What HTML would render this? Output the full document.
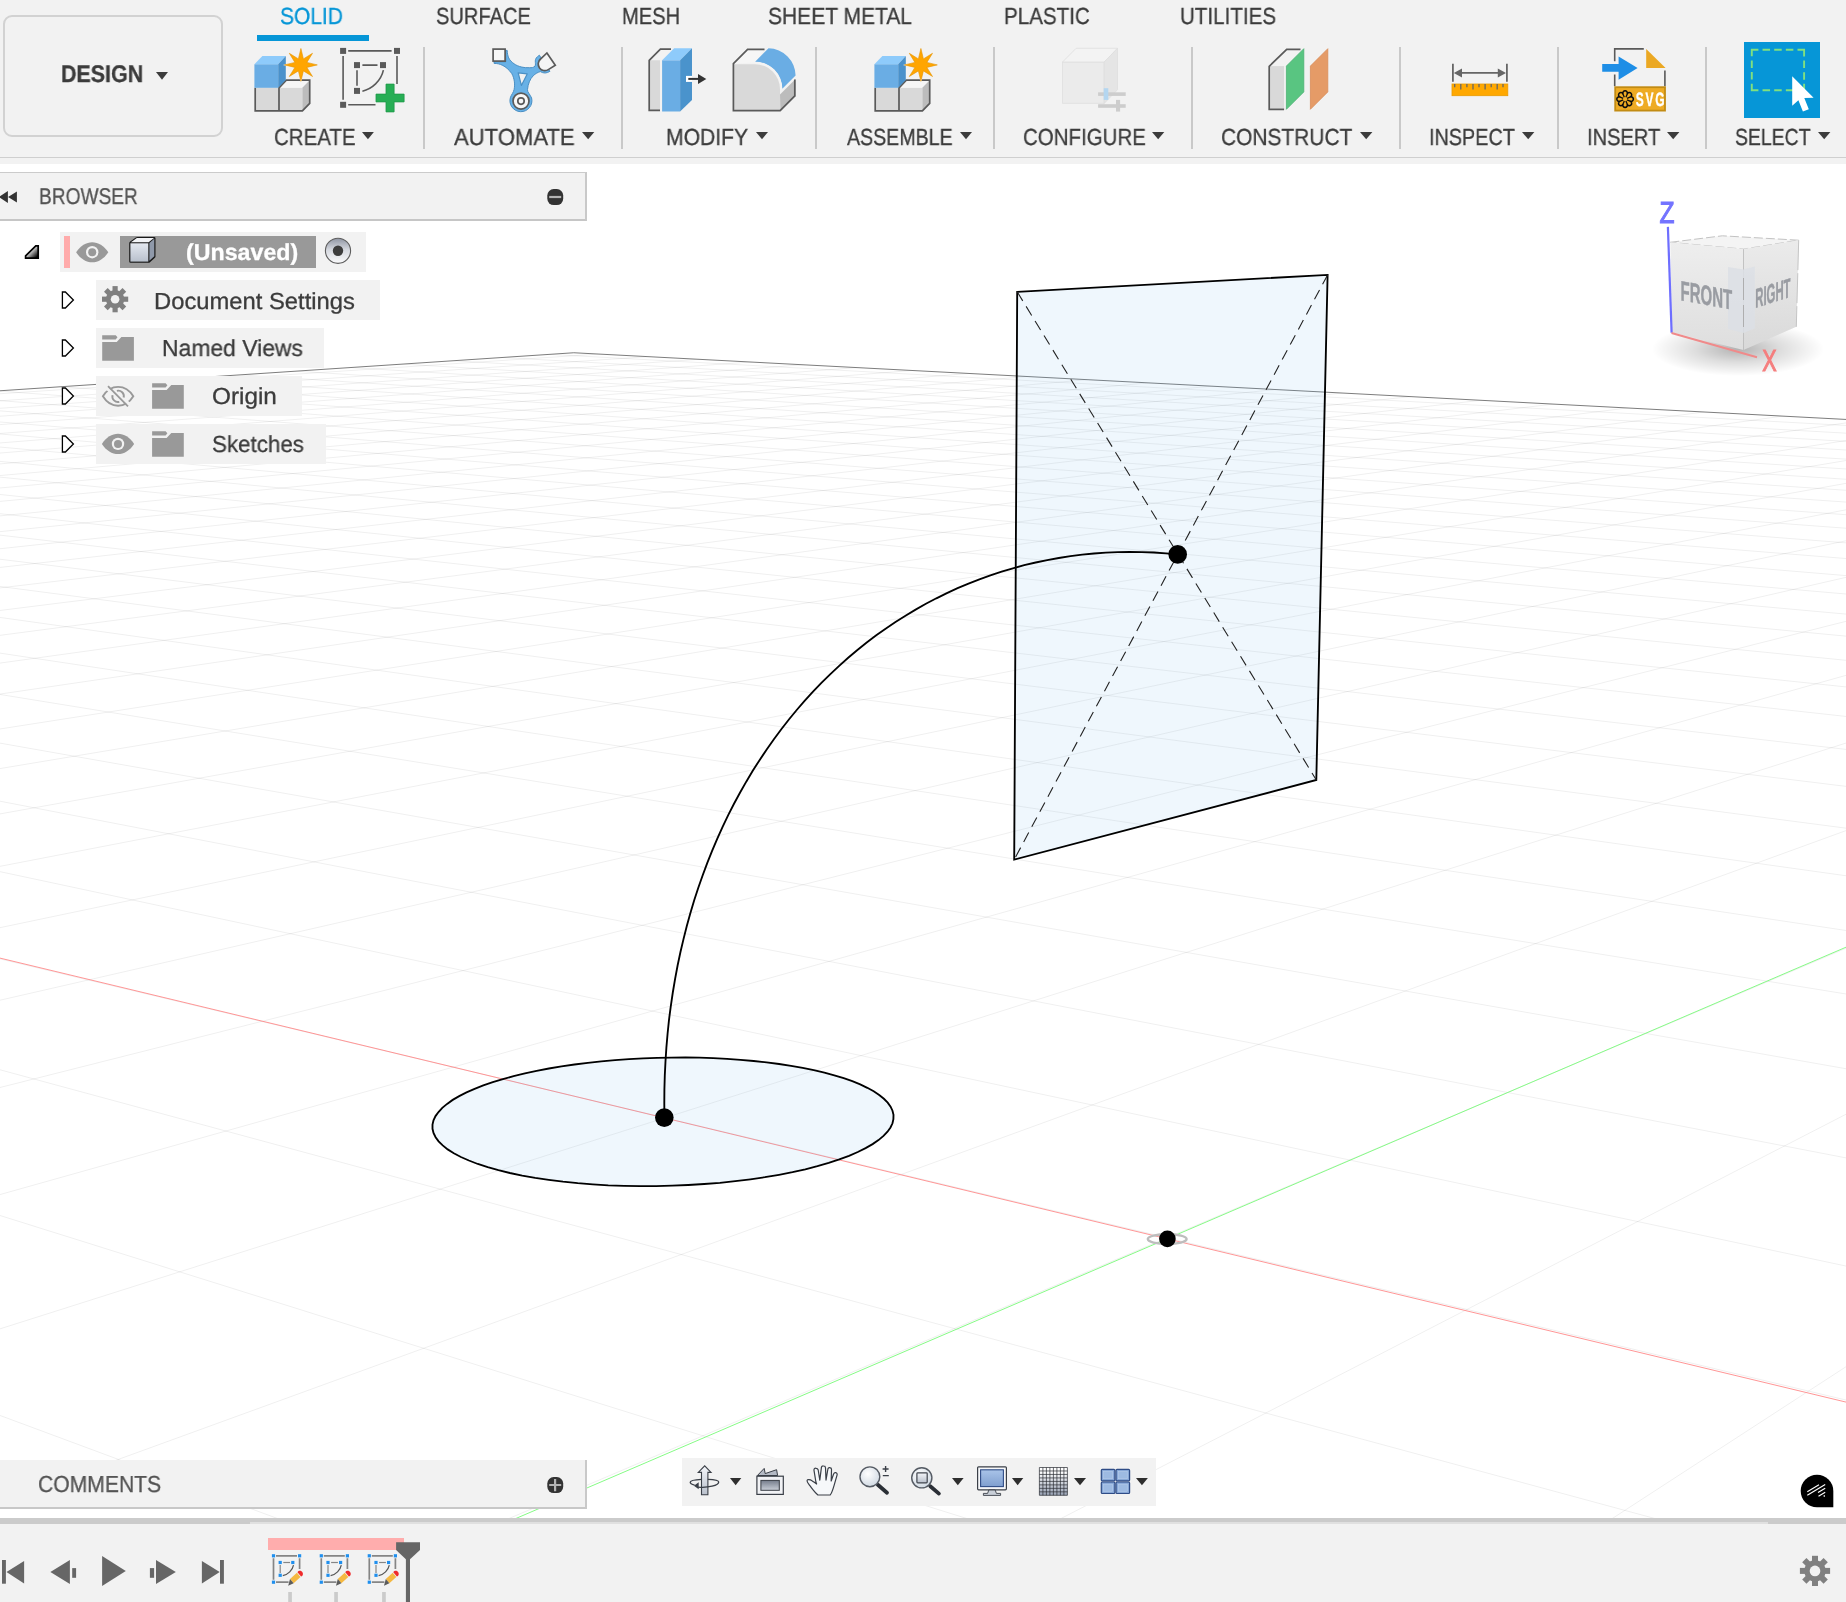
<!DOCTYPE html>
<html lang="en"><head><meta charset="utf-8"><title>Autodesk Fusion 360</title>
<style>
html,body{margin:0;padding:0}
body{width:1846px;height:1602px;position:relative;overflow:hidden;background:#fff;font-family:"Liberation Sans",sans-serif;text-rendering:geometricPrecision}
.a{position:absolute}
.t{position:absolute;white-space:nowrap;transform-origin:0 0;line-height:1;display:block;will-change:transform;-webkit-text-stroke:0.3px}
svg{position:absolute;overflow:visible}
#toolbar{left:0;top:0;width:1846px;height:164px;background:#f2f2f2}
#tbline{left:0;top:157px;width:1846px;height:1px;background:#cfcfcf}
.div{position:absolute;top:47px;width:2px;height:102px;background:#c9c9c9}
#canvas{left:0;top:164px;width:1846px;height:1354px;background:#fff;overflow:hidden}
#canvas svg{left:0;top:0}
.panelhdr{background:#f2f2f2;box-sizing:border-box}
.row{position:absolute;height:40px;background:#f2f2f2}
#timeline{left:0;top:1524px;width:1846px;height:78px;background:#f2f2f2}
#sep{left:0;top:1518px;width:1846px;height:6px;background:#cbcbcb}
#navbar{left:682px;top:1458px;width:474px;height:48px;background:#f2f2f2}
</style></head>
<body>
<div id="canvas" class="a"><svg width="1846" height="1354" viewBox="0 164 1846 1354">
<defs><clipPath id="gclip"><path d="M-5 391.1L573.8 352.75L1851 419.7V1600H-5Z"/></clipPath></defs>
<path clip-path="url(#gclip)" d="M-2908.9 586.4L666.5 349.6M-2895.1 598L714.7 352.1M-2880.5 610.3L764 354.7M-2865.1 623.2L814.5 357.4M-2848.8 636.8L866.2 360.1M-2831.7 651.2L919.2 362.8M-2813.5 666.5L973.5 365.6M-2794.2 682.6L1029.1 368.5M-2773.7 699.8L1086.2 371.5M-2751.8 718.2L1144.8 374.6M-2728.5 737.7L1204.9 377.7M-2703.6 758.6L1266.5 380.9M-2676.9 781L1329.9 384.2M-2648.2 805.1L1395 387.6M-2617.2 831L1461.8 391.1M-2583.8 859L1530.6 394.7M-2547.6 889.4L1601.3 398.4M-2508.2 922.5L1674 402.2M-2465.2 958.5L1748.8 406.1M-2418 998.1L1825.9 410.1M-2366.1 1041.6L1905.3 414.2M-2308.7 1089.7L1987.1 418.5M-2244.9 1143.2L2071.5 422.9M-2173.5 1203.1L2158.5 427.4M-2093 1270.6L2248.3 432.1M-2001.7 1347.2L2341.1 437M-1897.2 1434.8L2436.9 442M-1776.4 1536.1L2535.9 447.1M-1635.2 1654.5L2638.3 452.5M-1468 1794.7L2744.3 458M-1266.7 1963.5L2854.1 463.7M-1019.8 2170.6L2967.8 469.7M-709.8 2430.5L3085.7 475.8M-309.2 2766.4L3208 482.2M228.9 3217.6L3334.9 488.8M989.7 3855.6L3466.8 495.7M-2934.7 564.8L2147.6 4826.5M-2740.1 552.6L2537.4 3669.3M-2556.6 541.1L2772.6 2971M-2383.2 530.3L2930 2503.7M-2219.2 520L3042.7 2169.1M-2063.7 510.2L3127.4 1917.8M-1916.2 501L3193.3 1722M-1776 492.2L3246.1 1565.2M-1642.6 483.8L3289.4 1436.8M-1515.5 475.8L3325.4 1329.7M-1394.3 468.2L3356 1239M-1278.6 461L3382.2 1161.3M-1167.9 454L3404.9 1093.9M-1062.1 447.4L3424.8 1034.9M-960.8 441L3442.3 982.8M-863.6 434.9L3457.9 936.5M-770.5 429.1L3471.9 895M-681 423.5L3484.4 857.7M-595 418.1L3495.8 824M-512.3 412.9L3506.1 793.3M-432.7 407.9L3515.6 765.2M-356.1 403.1L3524.2 739.5M-282.2 398.5L3532.2 715.9M-210.9 394L3539.6 694M-142.2 389.7L3546.4 673.8M-75.8 385.5L3552.7 655M-11.6 381.5L3558.6 637.5M50.4 377.6L3564.1 621.2M110.4 373.8L3569.2 605.9M168.5 370.2L3574.1 591.6M224.7 366.7L3578.6 578.2M279.2 363.2L3582.9 565.5M332 359.9L3586.9 553.6M383.2 356.7L3590.7 542.3M432.9 353.6L3594.3 531.6M481.1 350.6L3597.7 521.5" fill="none" stroke="#000" stroke-opacity="0.062" stroke-width="1"/>
<path d="M-5 391.1L573.8 352.75L1851 419.7" fill="none" stroke="#7d7d7d" stroke-width="1"/>
<path d="M-10 955.7L1856 1404.5" stroke="#ff8a8a" stroke-width="0.9" fill="none"/>
<path d="M467.2 1539.4L1867.2 938.1" stroke="#86fb86" stroke-width="1" fill="none"/>
<ellipse cx="1167.2" cy="1239.1" rx="19.4" ry="4.9" fill="none" stroke="#bdbdbd" stroke-width="2.4"/>
<circle cx="1167.4" cy="1238.9" r="8.3" fill="#000"/>
<path d="M839.3 1159.4L849 1155.8L857.8 1152L865.6 1148.1L872.6 1144.1L878.5 1140.1L883.5 1135.9L887.5 1131.7L890.5 1127.5L892.5 1123.3L893.4 1119.1L893.5 1114.9L892.5 1110.7L890.6 1106.7L887.7 1102.7L883.9 1098.8L879.2 1095L873.7 1091.3L867.3 1087.8L860.2 1084.4L852.3 1081.2L843.7 1078.2L834.3 1075.3L824.4 1072.6L813.8 1070.1L802.7 1067.9L791.1 1065.8L779.1 1064L766.6 1062.4L753.7 1061L740.5 1059.8L727 1058.9L713.3 1058.2L699.4 1057.7L685.4 1057.5L671.3 1057.6L657.2 1057.9L643.1 1058.4L629 1059.1L615.1 1060.1L601.3 1061.3L587.8 1062.8L574.5 1064.5L561.5 1066.4L548.9 1068.5L536.6 1070.9L524.9 1073.4L513.6 1076.1L502.9 1079.1L492.8 1082.2L483.3 1085.4L474.6 1088.8L466.5 1092.4L459.2 1096.1L452.7 1099.9L447.1 1103.9L442.3 1107.9L438.5 1112L435.5 1116.1L433.5 1120.3L432.5 1124.6L432.5 1128.8L433.5 1133L435.6 1137.2L438.6 1141.3L442.7 1145.4L447.7 1149.4L453.8 1153.2L460.9 1157L468.9 1160.5L477.8 1164L487.7 1167.2L498.4 1170.2L509.9 1173L522.2 1175.6L535.2 1177.9L548.8 1179.9L563 1181.7L577.7 1183.2L592.8 1184.4L608.3 1185.3L624.1 1185.8L640.1 1186.1L656.1 1186.1L672.2 1185.7L688.3 1185L704.2 1184L719.9 1182.8L735.3 1181.2L750.4 1179.3L764.9 1177.2L779 1174.8L792.5 1172.2L805.3 1169.3L817.4 1166.2L828.7 1162.9Z" fill="#60b0f0" fill-opacity="0.1" stroke="#000" stroke-width="1.85"/>
<path d="M1017.2 291.8L1327.6 274.9L1316.3 780L1014.2 859.6Z" fill="#60b0f0" fill-opacity="0.1" stroke="#000" stroke-width="1.85" stroke-linejoin="miter"/>
<path d="M1017.2 291.8L1316.3 780.0M1327.6 274.9L1014.2 859.6" fill="none" stroke="#222" stroke-width="1.1" stroke-dasharray="10.6 6.5"/>
<path d="M664.4 1117.6L664.3 1103.5L664.4 1089.4L664.8 1075.3L665.5 1061.3L666.4 1047.4L667.6 1033.5L669 1019.8L670.8 1006.1L672.8 992.5L675.1 978.9L677.6 965.5L680.4 952.2L683.5 939.1L686.8 926L690.4 913.1L694.2 900.3L698.3 887.7L702.7 875.2L707.3 862.9L712.2 850.7L717.3 838.7L722.6 826.9L728.2 815.2L734 803.8L740.1 792.5L746.4 781.4L752.9 770.6L759.7 759.9L766.7 749.5L773.9 739.3L781.3 729.3L788.9 719.5L796.7 710L804.8 700.7L813 691.7L821.4 682.9L830.1 674.3L838.9 666.1L847.9 658L857.1 650.3L866.4 642.8L875.9 635.6L885.6 628.7L895.5 622L905.5 615.7L915.6 609.6L925.9 603.8L936.4 598.3L946.9 593.1L957.6 588.2L968.5 583.6L979.4 579.3L990.4 575.3L1001.6 571.7L1012.9 568.3L1024.2 565.2L1035.7 562.5L1047.2 560.1L1058.8 558L1070.5 556.2L1082.2 554.7L1094 553.5L1105.9 552.7L1117.8 552.1L1129.8 551.9L1141.8 552.1L1153.8 552.5L1165.8 553.3L1177.9 554.3" fill="none" stroke="#000" stroke-width="1.85"/>
<circle cx="664.3" cy="1117.6" r="9.3" fill="#000"/>
<circle cx="1177.7" cy="554.4" r="9.3" fill="#000"/>
</svg></div>
<div id="toolbar" class="a">
<div id="tbline" class="a"></div>
<div class="a" style="left:3px;top:15px;width:216px;height:118px;border:2px solid #d2d2d2;border-radius:9px;box-sizing:content-box"></div>
<span class="t " style="left:61.2px;top:63px;font-size:24px;color:#3c3c3c;transform:scaleX(0.8931);font-weight:bold;">DESIGN</span>
<svg style="left:156px;top:71.9px" width="12" height="7.7" viewBox="156 71.9 12 7.7"><path d="M156 71.9H168L162 79.6Z" fill="#3c3c3c"/></svg>
<span class="t " style="left:279.6px;top:5px;font-size:23.3px;color:#0696d7;transform:scaleX(0.9013);">SOLID</span>
<span class="t " style="left:435.8px;top:5px;font-size:23.3px;color:#3c3c3c;transform:scaleX(0.8620);">SURFACE</span>
<span class="t " style="left:621.9px;top:5px;font-size:23.3px;color:#3c3c3c;transform:scaleX(0.8628);">MESH</span>
<span class="t " style="left:767.7px;top:5px;font-size:23.3px;color:#3c3c3c;transform:scaleX(0.9016);">SHEET METAL</span>
<span class="t " style="left:1003.9px;top:5px;font-size:23.3px;color:#3c3c3c;transform:scaleX(0.8841);">PLASTIC</span>
<span class="t " style="left:1180.2px;top:5px;font-size:23.3px;color:#3c3c3c;transform:scaleX(0.8832);">UTILITIES</span>
<div class="a" style="left:257px;top:35px;width:112px;height:6px;background:#0696d7"></div>
<span class="t " style="left:273.9px;top:126px;font-size:23.3px;color:#3c3c3c;transform:scaleX(0.8789);">CREATE</span>
<svg style="left:362px;top:132.1px" width="11.9" height="7.3" viewBox="362 132.1 11.9 7.3"><path d="M362 132.1H373.9L367.95 139.4Z" fill="#3c3c3c"/></svg>
<span class="t " style="left:454.3px;top:126px;font-size:23.3px;color:#3c3c3c;transform:scaleX(0.9479);">AUTOMATE</span>
<svg style="left:582px;top:132.1px" width="12.3" height="7.3" viewBox="582 132.1 12.3 7.3"><path d="M582 132.1H594.3L588.15 139.4Z" fill="#3c3c3c"/></svg>
<span class="t " style="left:665.6px;top:126px;font-size:23.3px;color:#3c3c3c;transform:scaleX(0.9069);">MODIFY</span>
<svg style="left:755.7px;top:132.1px" width="12" height="7.3" viewBox="755.7 132.1 12 7.3"><path d="M755.7 132.1H767.7L761.7 139.4Z" fill="#3c3c3c"/></svg>
<span class="t " style="left:847px;top:126px;font-size:23.3px;color:#3c3c3c;transform:scaleX(0.8416);">ASSEMBLE</span>
<svg style="left:960.3px;top:132.1px" width="12" height="7.3" viewBox="960.3 132.1 12 7.3"><path d="M960.3 132.1H972.3L966.3 139.4Z" fill="#3c3c3c"/></svg>
<span class="t " style="left:1023px;top:126px;font-size:23.3px;color:#3c3c3c;transform:scaleX(0.8791);">CONFIGURE</span>
<svg style="left:1151.8px;top:132.1px" width="12.3" height="7.3" viewBox="1151.8 132.1 12.3 7.3"><path d="M1151.8 132.1H1164.1L1157.95 139.4Z" fill="#3c3c3c"/></svg>
<span class="t " style="left:1220.8px;top:126px;font-size:23.3px;color:#3c3c3c;transform:scaleX(0.8980);">CONSTRUCT</span>
<svg style="left:1359.5px;top:132.1px" width="12.4" height="7.3" viewBox="1359.5 132.1 12.4 7.3"><path d="M1359.5 132.1H1371.9L1365.7 139.4Z" fill="#3c3c3c"/></svg>
<span class="t " style="left:1429px;top:126px;font-size:23.3px;color:#3c3c3c;transform:scaleX(0.8504);">INSPECT</span>
<svg style="left:1521.8px;top:132.1px" width="12.4" height="7.3" viewBox="1521.8 132.1 12.4 7.3"><path d="M1521.8 132.1H1534.2L1528 139.4Z" fill="#3c3c3c"/></svg>
<span class="t " style="left:1586.7px;top:126px;font-size:23.3px;color:#3c3c3c;transform:scaleX(0.8631);">INSERT</span>
<svg style="left:1667.4px;top:132.1px" width="12.4" height="7.3" viewBox="1667.4 132.1 12.4 7.3"><path d="M1667.4 132.1H1679.8L1673.6 139.4Z" fill="#3c3c3c"/></svg>
<span class="t " style="left:1735.1px;top:126px;font-size:23.3px;color:#3c3c3c;transform:scaleX(0.8330);">SELECT</span>
<svg style="left:1817.8px;top:132.1px" width="12.4" height="7.3" viewBox="1817.8 132.1 12.4 7.3"><path d="M1817.8 132.1H1830.2L1824 139.4Z" fill="#3c3c3c"/></svg>
<div class="div" style="left:423px"></div>
<div class="div" style="left:621px"></div>
<div class="div" style="left:815px"></div>
<div class="div" style="left:993px"></div>
<div class="div" style="left:1191px"></div>
<div class="div" style="left:1399px"></div>
<div class="div" style="left:1557px"></div>
<div class="div" style="left:1705px"></div>
<svg style="left:240px;top:40px" width="180" height="80" viewBox="240 40 180 80"><g transform="translate(0 0)"><path d="M255.2 87.8H302.4V110.9H255.2Z" fill="#d9d9d9"/><path d="M279 87.8L286.3 80.2H309.7L302.4 87.8Z" fill="#f6f6f6"/><path d="M302.4 87.8L309.7 80.2V103.4L302.4 110.9Z" fill="#bcbcbc"/><path d="M255.2 87.8V110.9H302.4L309.7 103.4V80.2H286.3L279 87.8V110.9" fill="none" stroke="#5a5a5a" stroke-width="1.7" stroke-linejoin="miter"/><path d="M254.4 64.2H278.2V87.8H254.4Z" fill="#6aade4"/><path d="M254.4 64.2L262.4 56.1H285.8L278.2 64.2Z" fill="#8ecbfb"/><path d="M278.2 64.2L285.8 56.1V80L278.2 87.8Z" fill="#4a91cb"/><path d="M300.9 46.9L304.0 57.5L313.6 52.2L308.3 61.8L318.9 64.9L308.3 68.0L313.6 77.6L304.0 72.3L300.9 82.9L297.8 72.3L288.2 77.6L293.5 68.0L282.9 64.9L293.5 61.8L288.2 52.2L297.8 57.5Z" fill="#f2f2f2"/><path d="M300.9 48.5L303.4 58.9L312.5 53.3L306.9 62.4L317.3 64.9L306.9 67.4L312.5 76.5L303.4 70.9L300.9 81.3L298.4 70.9L289.3 76.5L294.9 67.4L284.5 64.9L294.9 62.4L289.3 53.3L298.4 58.9Z" fill="#ffa500" stroke="#e59400" stroke-width="0.6"/></g><rect x="340.1" y="47.9" width="6" height="6" fill="#5a5a5a"/><rect x="394.0" y="47.9" width="6" height="6" fill="#5a5a5a"/><rect x="340.1" y="101.8" width="6" height="6" fill="#5a5a5a"/><path d="M348.2 50.9H391.6M343.1 56.1V99.7M397 56.1V83.9M348.2 104.8H375.5" stroke="#5a5a5a" stroke-width="1.6" fill="none"/><rect x="354.0" y="62.1" width="6" height="6" fill="#5a5a5a"/><rect x="380.0" y="62.1" width="6" height="6" fill="#5a5a5a"/><rect x="354.0" y="87.9" width="6" height="6" fill="#5a5a5a"/><path d="M362.4 65.1H377.5M357 70.2V85.8M383.4 70.2C381 81 372 89 362.4 91.2" stroke="#5a5a5a" stroke-width="1.6" fill="none"/><path d="M386 84.1H394.1V94.1H404.1V101.9H394.1V111.9H386V101.9H376V94.1H386Z" fill="#27ae55" stroke="#1f9849" stroke-width="0.8"/></svg>
<svg style="left:470px;top:40px" width="130" height="80" viewBox="470 40 130 80"><path d="M494.1 63.4C499.8 63.4 505.8 65.5 511.7 73.4C514.8 79 515 85 514.1 89.5C513.5 92.5 511.5 94.5 510.5 97.2A11 11 0 1 0 531.6 98C530 94 527 92 527.5 89.5C528 84 530 79 533.2 75.8C535.5 73.5 538 72.3 540.3 71.6A8.9 8.9 0 0 0 549.9 71.3L544.5 63.8L539.4 55.2C536.5 57 535.3 59 535.3 60.9C535.3 63 535.8 64.8 535 66.2C533.5 67.6 531.5 67.8 529.6 67.7C527 67.9 524 67.6 521.8 67.1C519 66.4 516 65.3 514.1 63.8C511.5 62 509.7 60 508.7 57.9C507.7 55.6 507.3 53 507.2 50.4L505.8 50.4L505.8 61.8L494.1 61.8Z" fill="#68b1e6" stroke="#4a8fc4" stroke-width="1"/><path d="M518.2 72.8L527.2 73.9L521.4 85.4Z" fill="#f2f2f2" stroke="#4a8fc4" stroke-width="1.2" stroke-linejoin="round"/><rect x="493.1" y="49.1" width="12" height="12" fill="#f7f7f7" stroke="#5a5a5a" stroke-width="1.7"/><path d="M546.9 53L555.3 65.2L548.3 69.6A6.6 6.6 0 0 1 540.5 59Z" fill="#f5f5f5" stroke="#5a5a5a" stroke-width="1.7" stroke-linejoin="miter"/><circle cx="521" cy="101.1" r="8" fill="#f7f7f7" stroke="#5a5a5a" stroke-width="1.7"/><circle cx="521" cy="101.1" r="3.2" fill="#f7f7f7" stroke="#5a5a5a" stroke-width="1.7"/></svg>
<svg style="left:640px;top:40px" width="170" height="80" viewBox="640 40 170 80"><path d="M649.5 60.3H660V110.2H649.5Z" fill="#d9d9d9"/><path d="M660 110.4H649.2V60.4L660.4 49.2H671" fill="none" stroke="#5a5a5a" stroke-width="1.7"/><path d="M662.1 60.3H680.1V111.4H662.1Z" fill="#6aade4"/><path d="M662.1 60.3L674.1 48.3H692L680.1 60.3Z" fill="#8ecbfb"/><path d="M680.1 60.3L692 48.3V99.9L680.1 111.4Z" fill="#4a93cc"/><rect x="686" y="75.9" width="6" height="6" fill="#fff"/><path d="M688.3 78.9H699" stroke="#333" stroke-width="2" fill="none"/><path d="M698 74.1L706.3 78.9L698 84Z" fill="#333"/><path d="M733.4 64.2H755 A25 25 0 0 1 780 89 V110.5H733.4Z" fill="#d9d9d9"/><path d="M733.4 63.5L747.6 49.4H765L755 62.5Z" fill="#f6f6f6"/><path d="M780 94.5L795.6 78.9V96.2L780.4 111.4Z" fill="#bcbcbc"/><path d="M755.1 61.7L768.5 48.3A27.5 27.5 0 0 1 795.6 75.5L782.3 88.8A27 27 0 0 0 755.1 61.7Z" fill="#6aade4"/><path d="M755.1 62.7A26.5 26.5 0 0 1 781.3 89.5" fill="none" stroke="#f4f4f4" stroke-width="1.6"/><path d="M764.5 49.4H747.6L733.4 63.6V110.6H780.1L794.8 95.9V79.5" fill="none" stroke="#5a5a5a" stroke-width="1.7"/></svg>
<svg style="left:860px;top:40px" width="120" height="80" viewBox="860 40 120 80"><g transform="translate(620 0)"><path d="M255.2 87.8H302.4V110.9H255.2Z" fill="#d9d9d9"/><path d="M279 87.8L286.3 80.2H309.7L302.4 87.8Z" fill="#f6f6f6"/><path d="M302.4 87.8L309.7 80.2V103.4L302.4 110.9Z" fill="#bcbcbc"/><path d="M255.2 87.8V110.9H302.4L309.7 103.4V80.2H286.3L279 87.8V110.9" fill="none" stroke="#5a5a5a" stroke-width="1.7" stroke-linejoin="miter"/><path d="M254.4 64.2H278.2V87.8H254.4Z" fill="#6aade4"/><path d="M254.4 64.2L262.4 56.1H285.8L278.2 64.2Z" fill="#8ecbfb"/><path d="M278.2 64.2L285.8 56.1V80L278.2 87.8Z" fill="#4a91cb"/><path d="M300.9 46.9L304.0 57.5L313.6 52.2L308.3 61.8L318.9 64.9L308.3 68.0L313.6 77.6L304.0 72.3L300.9 82.9L297.8 72.3L288.2 77.6L293.5 68.0L282.9 64.9L293.5 61.8L288.2 52.2L297.8 57.5Z" fill="#f2f2f2"/><path d="M300.9 48.5L303.4 58.9L312.5 53.3L306.9 62.4L317.3 64.9L306.9 67.4L312.5 76.5L303.4 70.9L300.9 81.3L298.4 70.9L289.3 76.5L294.9 67.4L284.5 64.9L294.9 62.4L289.3 53.3L298.4 58.9Z" fill="#ffa500" stroke="#e59400" stroke-width="0.6"/></g></svg>
<svg style="left:1050px;top:40px" width="90" height="80" viewBox="1050 40 90 80"><path d="M1062.5 62H1104.2V103.4H1062.5Z" fill="#ebebeb" stroke="#dedede" stroke-width="0.8"/><path d="M1062.5 62L1076.1 48.3H1117.5L1104.2 62Z" fill="#f3f3f3" stroke="#dedede" stroke-width="0.8"/><path d="M1104.2 62L1117.5 48.3V89.7L1104.2 103.4Z" fill="#e5e5e5" stroke="#dedede" stroke-width="0.8"/><rect x="1098.1" y="92.3" width="27.6" height="3.6" fill="#cdcdcd"/><rect x="1098.1" y="104.2" width="27.6" height="3.6" fill="#cdcdcd"/><rect x="1103.7" y="88.2" width="4.6" height="11.7" fill="#b4d6f0"/><rect x="1116" y="99.9" width="4.1" height="11.7" fill="#cdcdcd"/></svg>
<svg style="left:1250px;top:40px" width="100" height="80" viewBox="1250 40 100 80"><path d="M1270 66.1H1284.1V108.6H1270Z" fill="#d9d9d9"/><path d="M1284.1 109.3H1269.2V66.3L1286.7 49.4H1300.5" fill="none" stroke="#5a5a5a" stroke-width="1.7"/><path d="M1286.4 66.1L1303.8 48.7V91.9L1286.4 109.3Z" fill="#59c581" stroke="#4db373" stroke-width="0.8"/><path d="M1310.4 66.1L1327.8 48.7V91.9L1310.4 109.3Z" fill="#e59b67" stroke="#d98c58" stroke-width="0.8"/></svg>
<svg style="left:1440px;top:40px" width="80" height="80" viewBox="1440 40 80 80"><rect x="1452" y="84" width="55.8" height="11.7" fill="#ffa800" stroke="#e99b00" stroke-width="0.8"/><path d="M1454.7 84V87.3M1460.8 84V89.6M1466.9 84V87.3M1473.0 84V89.6M1479.0 84V87.3M1485.1 84V89.6M1491.2 84V87.3M1497.2 84V89.6M1503.0 84V87.3" stroke="#666" stroke-width="1.3" fill="none"/><path d="M1452.9 63.8V81.7M1506.9 63.8V81.7M1459 72.9H1501" stroke="#666" stroke-width="1.8" fill="none"/><path d="M1453.8 72.9L1462 68.4V77.4ZM1506 72.9L1497.8 68.4V77.4Z" fill="#666"/></svg>
<svg style="will-change:transform;left:1595px;top:40px" width="80" height="80" viewBox="1595 40 80 80"><path d="M1643.8 48.9H1614.7V61.3M1614.7 74.5V86.3M1664.9 70.4V86.3" fill="none" stroke="#5a5a5a" stroke-width="1.6"/><path d="M1646.2 48.9L1665.6 67.9H1646.2Z" fill="#eba823"/><path d="M1602.2 64.1H1618.6V56.5L1637.6 67.9L1618.6 79.7V71.7H1602.2Z" fill="#1e8ee6"/><rect x="1615.2" y="87.2" width="49.8" height="23.4" fill="#eeab24" stroke="#c28c14" stroke-width="1.8"/><path d="M1630.55 101.36A2.32 2.32 0 1 1 1627.36 104.55A2.32 2.32 0 1 1 1622.84 104.55A2.32 2.32 0 1 1 1619.65 101.36A2.32 2.32 0 1 1 1619.65 96.84A2.32 2.32 0 1 1 1622.84 93.65A2.32 2.32 0 1 1 1627.36 93.65A2.32 2.32 0 1 1 1630.55 96.84A2.32 2.32 0 1 1 1630.55 101.36Z" fill="#eeab24" stroke="#0c0c0c" stroke-width="1.55" stroke-linejoin="round"/><path d="M1627.04 99.90L1630.55 101.36M1625.90 101.04L1627.36 104.55M1624.30 101.04L1622.84 104.55M1623.16 99.90L1619.65 101.36M1623.16 98.30L1619.65 96.84M1624.30 97.16L1622.84 93.65M1625.90 97.16L1627.36 93.65M1627.04 98.30L1630.55 96.84" stroke="#0c0c0c" stroke-width="1.3" fill="none"/><text transform="translate(1635.8 105.8) scale(0.62 1)" letter-spacing="2.9" font-family="Liberation Sans, sans-serif" font-weight="bold" font-size="19.3" fill="#fff" stroke="#fff" stroke-width="0.35">SVG</text></svg>
<div class="a" style="left:1744px;top:42px;width:76px;height:76px;background:#0696d7"></div>
<svg style="left:1744px;top:42px" width="76" height="76" viewBox="1744 42 76 76"><path d="M1750.9 49.8H1805M1804.1 48.9V91.2M1805 90.3H1750.9M1751.8 91.2V48.9" fill="none" stroke="#80e080" stroke-width="1.9" stroke-dasharray="7.5 4.15"/><path d="M1792.2 76.3V105.7L1798.4 100.2L1802.9 111.5L1808.8 109.2L1804.3 98.1L1813.6 97.7Z" fill="#fff"/></svg>
</div>
<div id="browser" class="a" style="left:0;top:0;width:600px;height:470px">
<div class="a panelhdr" style="left:-2px;top:172px;width:589px;height:49px;border:1px solid #cbcbcb;border-bottom:2px solid #c6c6c6;border-right:2px solid #c9c9c9"></div>
<svg style="left:0px;top:186px" width="20" height="22" viewBox="0 186 20 22"><path d="M7.9 191.1V203L-1 197ZM16.9 191.4V202.4L8.1 196.9Z" fill="#333"/></svg>
<span class="t " style="left:38.8px;top:185px;font-size:22.8px;color:#555;transform:scaleX(0.8390);">BROWSER</span>
<svg style="left:545px;top:187px" width="20" height="20" viewBox="545 187 20 20"><rect x="547.3" y="189.1" width="15.9" height="16" rx="6.4" fill="#333"/><rect x="549.2" y="195.9" width="12" height="2.2" fill="#b4b4b4"/></svg>
<div class="row" style="left:60px;top:232px;width:306px"></div>
<div class="row" style="left:96px;top:280px;width:284px"></div>
<div class="row" style="left:96px;top:328px;width:228px"></div>
<div class="row" style="left:96px;top:376px;width:206px"></div>
<div class="row" style="left:96px;top:424px;width:230px"></div>
<div class="a" style="left:64px;top:236px;width:6px;height:32px;background:#ffabab"></div>
<div class="a" style="left:120px;top:236px;width:196px;height:32px;background:#999"></div>
<svg style="left:20px;top:230px" width="350" height="44" viewBox="20 230 350 44"><defs><linearGradient id="tg" x1="0" y1="0" x2="1" y2="1"><stop offset="0.45" stop-color="#c8c8c8"/><stop offset="0.9" stop-color="#000"/></linearGradient><linearGradient id="cg" x1="0" y1="0" x2="0" y2="1"><stop offset="0" stop-color="#e4e8f0"/><stop offset="1" stop-color="#b8c0cc"/></linearGradient><linearGradient id="rg" x1="0" y1="0" x2="0" y2="1"><stop offset="0" stop-color="#8f95a3"/><stop offset="0.45" stop-color="#d4d7de"/><stop offset="1" stop-color="#fbfbfc"/></linearGradient></defs><path d="M25.6 255.9L35.8 245.9H38.2V258.1H25.6Z" fill="url(#tg)" stroke="#000" stroke-width="1.7" stroke-linejoin="miter"/><path d="M76.1 252.2C84.7 238.79999999999998 99.7 238.79999999999998 108.30000000000001 252.2C99.7 265.59999999999997 84.7 265.59999999999997 76.1 252.2Z" fill="#999"/><circle cx="92.2" cy="252.2" r="6.2" fill="#f2f2f2"/><circle cx="92.2" cy="252.2" r="4" fill="#999"/><path d="M129.2 243.4Q129.2 242.2 130.2 241.6L135.8 237.4Q136.6 236.9 137.6 236.9H154.2Q155.5 236.9 155.5 238.2V256.4Q155.5 257.2 154.9 257.8L150 262.2Q149.3 262.8 148.4 262.8H130.6Q129.2 262.8 129.2 261.4Z" fill="#1a1a1a"/><path d="M130.4 243.3H148.3V261.6H130.4Z" fill="url(#cg)"/><path d="M131 242.2L136.9 238.1H154L148.6 242.2Z" fill="#f3f4f7"/><path d="M149.4 243L154.3 238.8V256.3L149.4 260.8Z" fill="#8f99aa"/><circle cx="338" cy="250.8" r="12.6" fill="url(#rg)" stroke="#5e5e5e" stroke-width="1.1"/><circle cx="338" cy="250.8" r="5.2" fill="#3c3c3c"/></svg>
<span class="t " style="left:185.6px;top:241px;font-size:23px;color:#fff;transform:scaleX(1.0089);font-weight:bold;">(Unsaved)</span>
<svg style="left:55px;top:280px" width="80" height="40" viewBox="55 280 80 40"><path d="M62.4 292H65.4L73.4 300L65.4 308H62.4Z" fill="#fff" stroke="#000" stroke-width="1.3" stroke-linejoin="miter"/><circle cx="115.1" cy="299.2" r="9.1" fill="#808080"/><rect x="112.50" y="286.10" width="5.2" height="26.2" fill="#808080" transform="rotate(0 115.1 299.2)"/><rect x="112.50" y="286.10" width="5.2" height="26.2" fill="#808080" transform="rotate(45 115.1 299.2)"/><rect x="112.50" y="286.10" width="5.2" height="26.2" fill="#808080" transform="rotate(90 115.1 299.2)"/><rect x="112.50" y="286.10" width="5.2" height="26.2" fill="#808080" transform="rotate(135 115.1 299.2)"/><circle cx="115.1" cy="299.2" r="4.3" fill="#f2f2f2"/></svg>
<span class="t " style="left:153.5px;top:290px;font-size:23.2px;color:#3c3c3c;transform:scaleX(1.0253);">Document Settings</span>
<svg style="left:55px;top:328px" width="85" height="40" viewBox="55 328 85 40"><path d="M62.4 340H65.4L73.4 348L65.4 356H62.4Z" fill="#fff" stroke="#000" stroke-width="1.3" stroke-linejoin="miter"/><path d="M102.2 335.2H115.7L117.5 337.3L115.7 339.4H102.2Z" fill="#999"/><path d="M102.2 342.0H116.7L121.4 337.0H133.9V360.7H102.2Z" fill="#999"/></svg>
<span class="t " style="left:162.2px;top:337px;font-size:23.2px;color:#3c3c3c;transform:scaleX(0.9882);">Named Views</span>
<svg style="left:55px;top:376px" width="135" height="40" viewBox="55 376 135 40"><path d="M62.4 388H65.4L73.4 396L65.4 404H62.4Z" fill="#fff" stroke="#000" stroke-width="1.3" stroke-linejoin="miter"/><path d="M102.89999999999999 396.3C110.6 383.7 125.6 383.7 133.29999999999998 396.3C125.6 408.90000000000003 110.6 408.90000000000003 102.89999999999999 396.3Z" fill="none" stroke="#999" stroke-width="1.9" stroke-linejoin="miter"/><path d="M106.4 387.7L112.9 394.1M129.8 404.9L123.3 398.5" stroke="#f2f2f2" stroke-width="3.2" fill="none"/><path d="M112.5 395.1A5.6 5.6 0 0 0 119.3 401.8M123.69999999999999 397.5A5.6 5.6 0 0 0 116.89999999999999 390.8" fill="none" stroke="#999" stroke-width="1.9"/><path d="M108.0 386.1L128.0 406.40000000000003" stroke="#999" stroke-width="1.8"/><path d="M152.1 383.2H165.6L167.4 385.3L165.6 387.4H152.1Z" fill="#999"/><path d="M152.1 390.0H166.6L171.3 385.0H183.8V408.7H152.1Z" fill="#999"/></svg>
<span class="t " style="left:211.7px;top:385px;font-size:23.2px;color:#3c3c3c;transform:scaleX(1.0493);">Origin</span>
<svg style="left:55px;top:424px" width="135" height="40" viewBox="55 424 135 40"><path d="M62.4 436H65.4L73.4 444L65.4 452H62.4Z" fill="#fff" stroke="#000" stroke-width="1.3" stroke-linejoin="miter"/><path d="M101.9 443.9C110.5 430.5 125.5 430.5 134.1 443.9C125.5 457.29999999999995 110.5 457.29999999999995 101.9 443.9Z" fill="#999"/><circle cx="118" cy="443.9" r="6.2" fill="#f2f2f2"/><circle cx="118" cy="443.9" r="4" fill="#999"/><path d="M152.1 431.2H165.6L167.4 433.3L165.6 435.4H152.1Z" fill="#999"/><path d="M152.1 438.0H166.6L171.3 433.0H183.8V456.7H152.1Z" fill="#999"/></svg>
<span class="t " style="left:211.7px;top:433px;font-size:23.2px;color:#3c3c3c;transform:scaleX(0.9637);">Sketches</span>
</div>
<div id="viewcube" class="a" style="left:1620px;top:190px;width:226px;height:200px;will-change:transform"><svg style="left:0px;top:0px" width="226" height="200" viewBox="1620 190 226 200"><defs><linearGradient id="vf" x1="0" y1="0" x2="0" y2="1"><stop offset="0" stop-color="#eeeeee"/><stop offset="1" stop-color="#dedede"/></linearGradient><linearGradient id="vr" x1="0" y1="0" x2="0" y2="1"><stop offset="0" stop-color="#ebebeb"/><stop offset="1" stop-color="#d9d9d9"/></linearGradient><radialGradient id="vs" cx="0.5" cy="0.5" r="0.5"><stop offset="0" stop-color="#000" stop-opacity="0.30"/><stop offset="0.5" stop-color="#000" stop-opacity="0.13"/><stop offset="1" stop-color="#000" stop-opacity="0"/></radialGradient></defs><ellipse cx="1738" cy="349" rx="86" ry="27" fill="url(#vs)"/><path d="M1670.3 242.3L1722.3 235.8L1798.7 240.2L1743.5 249.1Z" fill="#f4f4f4" stroke="#c2c2c2" stroke-width="1" stroke-dasharray="9 3"/><path d="M1670.3 242.3L1743.5 249.1V350.1L1672 332.5Z" fill="url(#vf)"/><path d="M1743.5 249.1L1798.7 240.2L1796.3 326.8L1743.5 350.1Z" fill="url(#vr)"/><path d="M1743.5 249.1V350.1" stroke="#bdbdbd" stroke-width="0.9"/><path d="M1798.7 240.2L1796.3 326.8" stroke="#c4c4c4" stroke-width="1" stroke-dasharray="30 3"/><path d="M1728 267L1743.5 269.5L1754.8 266.5V328.5L1743.5 333L1728 329Z" fill="#dcdfe5" fill-opacity="0.85"/><path d="M1743.5 278V330" stroke="#a9a9a9" stroke-width="0.9" stroke-dasharray="22 5"/><path d="M1667.9 226.9L1671.6 332.8" stroke="#6e6eff" stroke-width="2.2" fill="none"/><path d="M1671.5 333L1757 357.2" stroke="#f08a8a" stroke-width="2" fill="none"/><text transform="matrix(0.86 0.157 0 1 1680.6 300.2)" font-family="Liberation Sans, sans-serif" font-weight="bold" font-size="27.8" fill="#999ca2" stroke="#999ca2" stroke-width="0.5" textLength="60" lengthAdjust="spacingAndGlyphs">FRONT</text><text transform="matrix(0.62 -0.198 0 1 1755.2 308)" font-family="Liberation Sans, sans-serif" font-weight="bold" font-size="27" fill="#999ca2" stroke="#999ca2" stroke-width="0.5" textLength="57" lengthAdjust="spacingAndGlyphs">RIGHT</text><text x="1659.6" y="222.8" font-family="Liberation Sans, sans-serif" font-size="30.5" fill="#7373ff" stroke="#7373ff" stroke-width="1.1" textLength="15" lengthAdjust="spacingAndGlyphs">Z</text><text x="1762.3" y="371.2" font-family="Liberation Sans, sans-serif" font-size="30.5" fill="#f57e7e" stroke="#f57e7e" stroke-width="1.1" textLength="14.4" lengthAdjust="spacingAndGlyphs">X</text></svg></div>
<div id="comments" class="a" style="left:0;top:1460px;width:590px;height:50px">
<div class="a panelhdr" style="left:-2px;top:0;width:589px;height:49px;border-bottom:2px solid #c8c8c8;border-right:2px solid #c9c9c9"></div>
</div>
<span class="t " style="left:37.9px;top:1473px;font-size:23.2px;color:#555;transform:scaleX(0.9108);">COMMENTS</span>
<svg style="left:545px;top:1474px" width="20" height="20" viewBox="545 1474 20 20"><rect x="547.3" y="1477.1" width="15.9" height="16" rx="6.4" fill="#333"/><path d="M549.2 1485H561.2M555.1 1479V1491.2" stroke="#b4b4b4" stroke-width="2.2"/></svg>
<div id="navbar" class="a"></div>
<svg style="left:682px;top:1458px" width="474" height="48" viewBox="682 1458 474 48"><defs><linearGradient id="ng" x1="0" y1="0" x2="0" y2="1"><stop offset="0" stop-color="#f4f6fa"/><stop offset="1" stop-color="#b9c0cc"/></linearGradient><linearGradient id="nb" x1="0" y1="0" x2="0" y2="1"><stop offset="0" stop-color="#a9c4e8"/><stop offset="1" stop-color="#7f9fd0"/></linearGradient><radialGradient id="nl" cx="0.4" cy="0.35" r="0.7"><stop offset="0" stop-color="#ffffff"/><stop offset="1" stop-color="#cfd8e2"/></radialGradient></defs><path d="M701.5 1479.4C695 1479.8 690.2 1480.8 690.2 1482.2C690.2 1483.4 692 1484.4 694.6 1485.2" fill="none" stroke="#3a3f47" stroke-width="1.3"/><path d="M701.5 1494.8V1472.4H698.3L704.7 1465.9L711 1472.4H707.9V1494.8Z" fill="url(#ng)" stroke="#3a3f47" stroke-width="1.1"/><path d="M698 1487.1C708 1488 718.7 1485.6 718.7 1482C718.7 1480.4 714 1479.5 707.9 1479.3" fill="none" stroke="#3a3f47" stroke-width="1.3"/><path d="M693.9 1485.7L698.7 1482.2V1489.2Z" fill="#3a3f47"/><path d="M757.4 1475.5L764.2 1468.4L765.2 1473.6L776.6 1469.7L777.6 1475.5Z" fill="#b4bac5" stroke="#3a3f47" stroke-width="1"/><rect x="756.9" y="1476.2" width="26.4" height="18.2" fill="#f1f2f5" stroke="#3a3f47" stroke-width="1.2"/><defs><linearGradient id="nd" x1="0" y1="0" x2="0" y2="1"><stop offset="0" stop-color="#757d8c"/><stop offset="1" stop-color="#c9ced7"/></linearGradient></defs><rect x="760.9" y="1480.4" width="18.4" height="9.9" fill="url(#nd)" stroke="#3a3f47" stroke-width="1"/><path d="M817.9 1495C816 1493.3 814.6 1491.8 813.3 1490.1C812 1488.6 811 1487.3 810.1 1485.9C808.8 1484 807.2 1482.6 807.1 1481C807 1479.6 808 1479.3 808.8 1479.7C810 1479.7 811 1480 812 1480.7C813.6 1481.7 815 1483 816.6 1484C816.4 1483.3 816.1 1482.7 815.9 1482L814 1470.3C813.7 1468.6 815.3 1467.9 815.9 1468.4C817 1468.4 817.9 1469 818.2 1470L819.8 1480.1L821.4 1467.7C821.5 1466.2 822.4 1465.8 823.4 1465.9C824.6 1465.9 825.4 1466.6 825.5 1467.7L826 1480.1L827.9 1469C828.2 1467.8 828.9 1467.5 829.8 1467.7C831 1467.9 831.6 1468.6 831.5 1469.5L831.2 1481L833.5 1474.2C834 1472.9 834.8 1472.4 835.7 1472.6C836.9 1472.9 837.4 1473.8 837.1 1474.9L834.1 1485.3C833.5 1487.4 832.9 1489.3 832.2 1491.1C831.7 1492.6 831 1493.9 830.2 1495Z" fill="#f6f8fa" stroke="#3a3f47" stroke-width="1.2" stroke-linejoin="round"/><path d="M877.8 1484.8L887 1492.8" stroke="#2b2f36" stroke-width="3.8" stroke-linecap="round"/><circle cx="869.9" cy="1476.8" r="9.9" fill="url(#nl)" stroke="#555b64" stroke-width="1.4"/><path d="M882.6 1469H888.6M885.6 1466V1472M882.8 1475.6H888.8" stroke="#3a3f47" stroke-width="1.4"/><path d="M930.3 1486.3L938.9 1493.6" stroke="#2b2f36" stroke-width="3.8" stroke-linecap="round"/><circle cx="921.8" cy="1477.8" r="10.1" fill="url(#nl)" stroke="#555b64" stroke-width="1.4"/><rect x="916.9" y="1472.8" width="10.3" height="10" rx="0.8" fill="url(#ng)" stroke="#3f444d" stroke-width="1.2"/><rect x="977.6" y="1466.8" width="28.8" height="23" rx="1" fill="#f6f7f9" stroke="#3a3f47" stroke-width="1.2"/><rect x="980.6" y="1469.8" width="22.8" height="16.8" fill="url(#nb)" stroke="#2f4c86" stroke-width="1.1"/><path d="M988.8 1490L987.6 1493.4H983.4V1495.4H1000.6V1493.4H996.4L995.2 1490Z" fill="#c9cfd8" stroke="#3a3f47" stroke-width="0.9"/><defs><linearGradient id="ngr" x1="0" y1="0" x2="0" y2="1"><stop offset="0.15" stop-color="#ffffff"/><stop offset="1" stop-color="#98a2b4"/></linearGradient></defs><rect x="1039.4" y="1467.5" width="28" height="27.8" fill="url(#ngr)"/><path d="M1039.40 1467.5V1495.3M1039.4 1467.50H1067.4M1042.90 1467.5V1495.3M1039.4 1470.97H1067.4M1046.40 1467.5V1495.3M1039.4 1474.45H1067.4M1049.90 1467.5V1495.3M1039.4 1477.92H1067.4M1053.40 1467.5V1495.3M1039.4 1481.40H1067.4M1056.90 1467.5V1495.3M1039.4 1484.88H1067.4M1060.40 1467.5V1495.3M1039.4 1488.35H1067.4M1063.90 1467.5V1495.3M1039.4 1491.83H1067.4M1067.40 1467.5V1495.3M1039.4 1495.30H1067.4" stroke="#2c2f36" stroke-width="0.72" fill="none"/><rect x="1101.3" y="1469.4" width="13.6" height="11.5" rx="1" fill="#86a6d6" stroke="#2f4c86" stroke-width="1.2"/><rect x="1103.6" y="1471.6000000000001" width="9" height="7.1" fill="#9dbae2" stroke="#b4cbea" stroke-width="0.7"/><rect x="1116" y="1469.4" width="13.6" height="11.5" rx="1" fill="#86a6d6" stroke="#2f4c86" stroke-width="1.2"/><rect x="1118.3" y="1471.6000000000001" width="9" height="7.1" fill="#9dbae2" stroke="#b4cbea" stroke-width="0.7"/><rect x="1101.3" y="1482" width="13.6" height="11.5" rx="1" fill="#86a6d6" stroke="#2f4c86" stroke-width="1.2"/><rect x="1103.6" y="1484.2" width="9" height="7.1" fill="#9dbae2" stroke="#b4cbea" stroke-width="0.7"/><rect x="1116" y="1482" width="13.6" height="11.5" rx="1" fill="#86a6d6" stroke="#2f4c86" stroke-width="1.2"/><rect x="1118.3" y="1484.2" width="9" height="7.1" fill="#9dbae2" stroke="#b4cbea" stroke-width="0.7"/></svg>
<svg style="left:730.4px;top:1478.3px" width="11.3" height="7.3" viewBox="730.4 1478.3 11.3 7.3"><path d="M730.4 1478.3H741.7L736.05 1485.6Z" fill="#2e2e2e"/></svg>
<svg style="left:952.1px;top:1478.3px" width="11.6" height="7.3" viewBox="952.1 1478.3 11.6 7.3"><path d="M952.1 1478.3H963.7L957.9 1485.6Z" fill="#2e2e2e"/></svg>
<svg style="left:1012.1px;top:1478.3px" width="11.3" height="7.3" viewBox="1012.1 1478.3 11.3 7.3"><path d="M1012.1 1478.3H1023.4L1017.75 1485.6Z" fill="#2e2e2e"/></svg>
<svg style="left:1074px;top:1478.3px" width="12" height="7.3" viewBox="1074 1478.3 12 7.3"><path d="M1074 1478.3H1086L1080 1485.6Z" fill="#2e2e2e"/></svg>
<svg style="left:1136px;top:1478.3px" width="11.9" height="7.3" viewBox="1136 1478.3 11.9 7.3"><path d="M1136 1478.3H1147.9L1141.95 1485.6Z" fill="#2e2e2e"/></svg>
<svg style="left:1798px;top:1472px" width="40" height="38" viewBox="1798 1472 40 38"><path d="M1817 1474.7A16.3 16.3 0 1 0 1817 1507.3H1833.3V1491A16.3 16.3 0 0 0 1817 1474.7Z" fill="#000"/><path d="M1807.3 1495.3L1825.2 1484.5M1807.3 1491.8L1819 1484.8M1818.5 1496.3L1825.2 1492.2M1818 1492.6L1825.2 1488.3" stroke="#fff" stroke-width="1.15" fill="none"/><rect x="1823.6" y="1495.3" width="1.4" height="1.4" fill="#fff"/></svg>
<div id="sep" class="a"></div><div class="a" style="left:250px;top:1522px;width:1518px;height:2px;background:#e0e0e0"></div><div id="timeline" class="a"></div>
<svg style="left:0px;top:1550px" width="230" height="40" viewBox="0 1550 230 40"><rect x="2" y="1560" width="3.9" height="23.7" fill="#666"/><path d="M24.1 1560.9V1583.4L6.5 1572Z" fill="#666"/><path d="M69.9 1560V1584L50.4 1572Z" fill="#666"/><rect x="72.2" y="1568.1" width="3.9" height="9.7" fill="#666"/><path d="M102.1 1556.1V1586L125.8 1571Z" fill="#666"/><rect x="149.9" y="1568.1" width="4.2" height="9.7" fill="#666"/><path d="M156 1560V1584L175.8 1572Z" fill="#666"/><path d="M201.9 1560.9V1583.4L219.7 1572Z" fill="#666"/><rect x="220" y="1560" width="3.9" height="23.7" fill="#666"/></svg>
<div class="a" style="left:268px;top:1538px;width:136px;height:12px;background:#ffadad"></div>
<svg style="left:260px;top:1536px" width="170" height="66" viewBox="260 1536 170 66"><g transform="translate(0 0)"><path d="M276 1555.8H297M273.5 1558.3V1579.7M299.6 1558.3V1569M276 1582.2H288.6" stroke="#858585" stroke-width="1.7" fill="none"/><rect x="271.9" y="1554.2" width="3.2" height="3.2" fill="#1f8fee"/><rect x="298.0" y="1554.2" width="3.2" height="3.2" fill="#1f8fee"/><rect x="271.9" y="1580.6000000000001" width="3.2" height="3.2" fill="#1f8fee"/><path d="M283.3 1562.5H290.1" stroke="#858585" stroke-width="1.2" fill="none"/><path d="M280.2 1565.1V1572.9" stroke="#858585" stroke-width="1.2" fill="none"/><path d="M293.5 1565.1C292.6 1570 288 1574.6 282.8 1575.6" stroke="#555" stroke-width="1.2" fill="none"/><rect x="278.59999999999997" y="1560.9" width="3.2" height="3.2" fill="#1f8fee"/><rect x="291.2" y="1560.9" width="3.2" height="3.2" fill="#1f8fee"/><rect x="278.59999999999997" y="1573.7" width="3.2" height="3.2" fill="#1f8fee"/><path d="M296.9 1572.7L300.5 1577.1L293.6 1583.3L290 1578.9Z" fill="#f5b942"/><path d="M290 1578.9L293.6 1583.3L288.2 1585.7Z" fill="#5c5c5c"/><path d="M297.5 1572.2C298.6 1570.3 301.6 1570.4 302.6 1572.4C303.5 1574.2 302.7 1576 301.1 1576.6Z" fill="#ef2b2b"/></g><g transform="translate(47.8 0)"><path d="M276 1555.8H297M273.5 1558.3V1579.7M299.6 1558.3V1569M276 1582.2H288.6" stroke="#858585" stroke-width="1.7" fill="none"/><rect x="271.9" y="1554.2" width="3.2" height="3.2" fill="#1f8fee"/><rect x="298.0" y="1554.2" width="3.2" height="3.2" fill="#1f8fee"/><rect x="271.9" y="1580.6000000000001" width="3.2" height="3.2" fill="#1f8fee"/><path d="M283.3 1562.5H290.1" stroke="#858585" stroke-width="1.2" fill="none"/><path d="M280.2 1565.1V1572.9" stroke="#858585" stroke-width="1.2" fill="none"/><path d="M293.5 1565.1C292.6 1570 288 1574.6 282.8 1575.6" stroke="#555" stroke-width="1.2" fill="none"/><rect x="278.59999999999997" y="1560.9" width="3.2" height="3.2" fill="#1f8fee"/><rect x="291.2" y="1560.9" width="3.2" height="3.2" fill="#1f8fee"/><rect x="278.59999999999997" y="1573.7" width="3.2" height="3.2" fill="#1f8fee"/><path d="M296.9 1572.7L300.5 1577.1L293.6 1583.3L290 1578.9Z" fill="#f5b942"/><path d="M290 1578.9L293.6 1583.3L288.2 1585.7Z" fill="#5c5c5c"/><path d="M297.5 1572.2C298.6 1570.3 301.6 1570.4 302.6 1572.4C303.5 1574.2 302.7 1576 301.1 1576.6Z" fill="#ef2b2b"/></g><g transform="translate(95.8 0)"><path d="M276 1555.8H297M273.5 1558.3V1579.7M299.6 1558.3V1569M276 1582.2H288.6" stroke="#858585" stroke-width="1.7" fill="none"/><rect x="271.9" y="1554.2" width="3.2" height="3.2" fill="#1f8fee"/><rect x="298.0" y="1554.2" width="3.2" height="3.2" fill="#1f8fee"/><rect x="271.9" y="1580.6000000000001" width="3.2" height="3.2" fill="#1f8fee"/><path d="M283.3 1562.5H290.1" stroke="#858585" stroke-width="1.2" fill="none"/><path d="M280.2 1565.1V1572.9" stroke="#858585" stroke-width="1.2" fill="none"/><path d="M293.5 1565.1C292.6 1570 288 1574.6 282.8 1575.6" stroke="#555" stroke-width="1.2" fill="none"/><rect x="278.59999999999997" y="1560.9" width="3.2" height="3.2" fill="#1f8fee"/><rect x="291.2" y="1560.9" width="3.2" height="3.2" fill="#1f8fee"/><rect x="278.59999999999997" y="1573.7" width="3.2" height="3.2" fill="#1f8fee"/><path d="M296.9 1572.7L300.5 1577.1L293.6 1583.3L290 1578.9Z" fill="#f5b942"/><path d="M290 1578.9L293.6 1583.3L288.2 1585.7Z" fill="#5c5c5c"/><path d="M297.5 1572.2C298.6 1570.3 301.6 1570.4 302.6 1572.4C303.5 1574.2 302.7 1576 301.1 1576.6Z" fill="#ef2b2b"/></g><rect x="288.2" y="1592" width="3.7" height="10" fill="#cbcbcb"/><rect x="334.2" y="1592" width="3.7" height="10" fill="#cbcbcb"/><rect x="382.09999999999997" y="1592" width="3.7" height="10" fill="#cbcbcb"/><path d="M396.1 1542.2H420V1550L410 1559.3H405.9L396.1 1550Z" fill="#666"/><rect x="405.9" y="1557" width="4.1" height="45" fill="#666"/></svg>
<svg style="left:1795px;top:1552px" width="40" height="40" viewBox="1795 1552 40 40"><circle cx="1815" cy="1570.9" r="10.7" fill="#808080"/><rect x="1812.00" y="1555.80" width="6" height="30.2" fill="#808080" transform="rotate(0 1815 1570.9)"/><rect x="1812.00" y="1555.80" width="6" height="30.2" fill="#808080" transform="rotate(45 1815 1570.9)"/><rect x="1812.00" y="1555.80" width="6" height="30.2" fill="#808080" transform="rotate(90 1815 1570.9)"/><rect x="1812.00" y="1555.80" width="6" height="30.2" fill="#808080" transform="rotate(135 1815 1570.9)"/><circle cx="1815" cy="1570.9" r="5.3" fill="#f2f2f2"/></svg>
</body></html>
